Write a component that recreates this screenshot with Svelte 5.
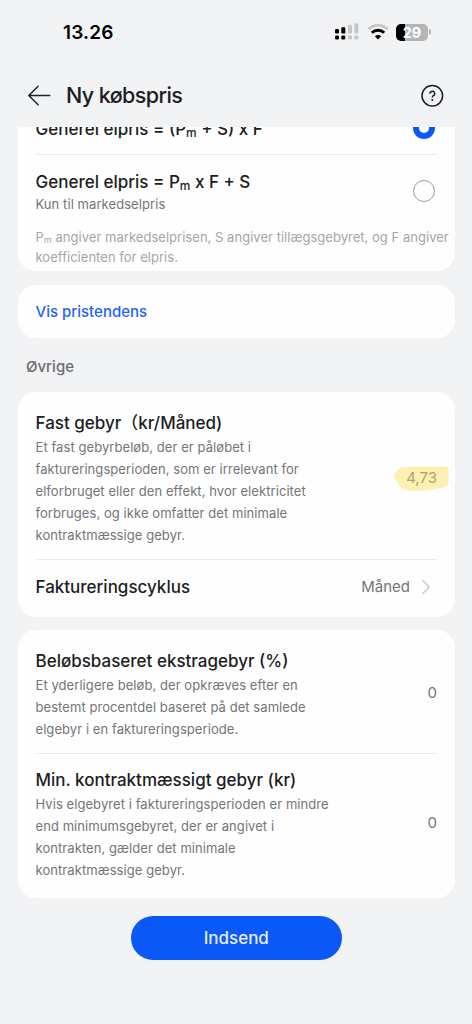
<script>
  let formula = $state('sum');

  // Descriptions keep their own line breaks (white-space: pre-line).
  const fixedFee = {
    title: 'Fast gebyr（kr/Måned)',
    text: 'Et fast gebyrbeløb, der er påløbet i\nfaktureringsperioden, som er irrelevant for\nelforbruget eller den effekt, hvor elektricitet\nforbruges, og ikke omfatter det minimale\nkontraktmæssige gebyr.',
    value: '4,73'
  };

  const extraFees = [
    {
      key: 'surcharge',
      title: 'Beløbsbaseret ekstragebyr (%)',
      text: 'Et yderligere beløb, der opkræves efter en\nbestemt procentdel baseret på det samlede\nelgebyr i en faktureringsperiode.',
      value: '0'
    },
    {
      key: 'minimum',
      title: 'Min. kontraktmæssigt gebyr (kr)',
      text: 'Hvis elgebyret i faktureringsperioden er mindre\nend minimumsgebyret, der er angivet i\nkontrakten, gælder det minimale\nkontraktmæssige gebyr.',
      value: '0'
    }
  ];
</script>

<div class="screen">
  <div class="status">
    <span class="time">13.26</span>
    <div class="indicators">
      <svg width="26" height="18" viewBox="0 0 26 18">
        <rect x="1" y="6" width="4" height="4.5" rx="1.2" />
        <rect x="7.3" y="4.3" width="4" height="6.2" rx="1.2" />
        <g fill="#c5c6c8">
          <rect x="14" y="2" width="4" height="8.5" rx="1.2" />
          <rect x="20.3" y="0.3" width="4" height="10.2" rx="1.2" />
          <rect x="14" y="12.4" width="4" height="4.2" rx="1.4" />
          <rect x="20.3" y="12.4" width="4" height="4.2" rx="1.4" />
        </g>
        <rect x="1" y="12.4" width="4" height="4.2" rx="1.4" />
        <rect x="7.3" y="12.4" width="4" height="4.2" rx="1.4" />
      </svg>
      <svg class="wifi" width="22" height="16" viewBox="0 0 22 16">
        <path d="M1.4 5.2a13.7 13.7 0 0 1 19.2 0" fill="none" stroke="#c5c6c8" stroke-width="2.8" />
        <path d="M4.8 8.8a8.9 8.9 0 0 1 12.4 0" fill="none" stroke="#000" stroke-width="2.9" />
        <path d="M11 15.4L7.9 12.3a4.4 4.4 0 0 1 6.2 0z" />
      </svg>
      <div class="battery">
        <div class="cell">29</div>
        <i></i>
      </div>
    </div>
  </div>

  <header>
    <svg width="24" height="22" viewBox="0 0 24 22" fill="none" stroke="#222325" stroke-width="1.5" stroke-linecap="round" stroke-linejoin="round">
      <path d="M22.8 10.500H1.800M11.100 1.200L1.800 10.500l9.300 9.300" />
    </svg>
    <h1>Ny købspris</h1>
    <svg width="24" height="24" viewBox="0 0 24 24" fill="none" stroke="#1c1d1f">
      <circle cx="12.3" cy="11.7" r="10.3" stroke-width="1.5" />
      <path d="M9.900 9.700a2.400 2.300 0 1 1 3.500 2c-.8.5-1.100.9-1.100 1.700" stroke-width="1.5" />
      <circle cx="12.3" cy="15.9" r="1" fill="#1c1d1f" stroke="none" />
    </svg>
  </header>

  <main>
    <section class="card formulas">
      <div class="option first">
        <h2>Generel elpris = (P<sub>m</sub> + S) x F</h2>
        <button class="radio" class:on={formula === 'sum'} aria-label="(Pm + S) x F" onclick={() => (formula = 'sum')}></button>
      </div>
      <hr />
      <div class="option second">
        <div>
          <h2>Generel elpris = P<sub>m</sub> x F + S</h2>
          <p class="desc">Kun til markedselpris</p>
        </div>
        <button class="radio" class:on={formula === 'product'} aria-label="Pm x F + S" onclick={() => (formula = 'product')}></button>
      </div>
      <p class="note">P<sub>m</sub> angiver markedselprisen, S angiver tillægsgebyret, og F angiver<br />koefficienten for elpris.</p>
    </section>

    <section class="card trend">Vis pristendens</section>

    <h3>Øvrige</h3>

    <section class="card">
      <div class="fee">
        <div>
          <h2>{fixedFee.title}</h2>
          <p class="desc">{fixedFee.text}</p>
        </div>
        <span class="value marked">
          <svg width="56" height="26" viewBox="0 0 56 26">
            <path d="M8 1.500C20 0 38 .5 50 .8c4 .2 5.500 2.500 4.500 5.500-.8 2 .5 3 0 6.500-.2 2 .5 4-.5 5.700C51 22 44 22.500 38 23.600c-8 1.500-20 1.600-26 .3-4-.8-7.500-4-7.800-7.900C2 15 0 12.500.2 9.500.5 6 4 5.500 4.300 4 5 2.500 6 1.800 8 1.500z" fill="#feefb2" />
          </svg>
          <span>{fixedFee.value}</span>
        </span>
      </div>
      <hr />
      <div class="cycle">
        <h2>Faktureringscyklus</h2>
        <span class="value">Måned</span>
        <svg width="10" height="16" viewBox="0 0 10 16" fill="none" stroke="#c8c8ca" stroke-width="1.4">
          <path d="M1.500 1.300L8.200 8l-6.700 6.700" />
        </svg>
      </div>
    </section>

    <section class="card extra">
      {#each extraFees as fee, i (fee.key)}
        {#if i > 0}<hr />{/if}
        <div class="fee">
          <div>
            <h2>{fee.title}</h2>
            <p class="desc">{fee.text}</p>
          </div>
          <span class="value">{fee.value}</span>
        </div>
      {/each}
    </section>

    <button class="submit">Indsend</button>
  </main>
</div>

<style>
  :global(body) {
    background: #f1f3f5;
  }
  .screen {
    height: 1024px;
    overflow: hidden;
    display: flex;
    flex-direction: column;
    background: #f1f3f5;
    color: #1c1d1f;
    font-family: Inter, 'Noto Sans CJK SC', sans-serif;
  }
  h1,
  h2,
  h3,
  p {
    margin: 0;
    font-weight: 400;
  }
  svg {
    display: block;
    flex: none;
  }
  .status {
    height: 64px;
    box-sizing: border-box;
    padding: 0 41px 0 63px;
    display: flex;
    align-items: center;
    justify-content: space-between;
  }
  .time {
    font-size: 19px;
    font-weight: 600;
    color: #000;
    letter-spacing: 0.15px;
  }
  .indicators {
    display: flex;
    align-items: center;
    gap: 7px;
  }
  .battery {
    display: flex;
    align-items: center;
    gap: 1px;
  }
  .cell {
    width: 32px;
    height: 17px;
    border-radius: 5px;
    background: linear-gradient(90deg, #000 29%, #b4b5b7 29%);
    color: #fff;
    font-size: 14.5px;
    font-weight: 700;
    line-height: 17px;
    text-align: center;
  }
  .battery i {
    width: 2px;
    height: 6px;
    border-radius: 0 2px 2px 0;
    background: #b4b5b7;
  }
  header {
    height: 63px;
    box-sizing: border-box;
    padding: 0 28px 0 27px;
    display: flex;
    align-items: center;
  }
  h1 {
    flex: 1;
    margin-left: 15px;
    font-size: 21.5px;
    line-height: 26px;
    padding-bottom: 1px;
    font-weight: 500;
    letter-spacing: -0.6px;
  }
  main {
    flex: 1;
    min-height: 0;
    overflow: hidden;
    padding: 0 17.5px 0 18px;
  }
  .card {
    background: #fefefe;
    border-radius: 18px;
    padding: 0 17.5px;
    margin-bottom: 13px;
  }
  .formulas {
    height: 168px;
    margin-top: -24px;
    margin-bottom: 14px;
  }
  hr {
    height: 1px;
    margin: 0;
    border: 0;
    background: #e9eaeb;
  }
  h2 {
    font-size: 17px;
    font-weight: 500;
    line-height: 22px;
    letter-spacing: 0;
    white-space: nowrap;
  }
  sub {
    font-size: 0.7em;
    line-height: 0;
    vertical-align: -0.14em;
  }
  .desc {
    font-size: 13px;
    line-height: 22px;
    letter-spacing: 0.07px;
    color: #747577;
    white-space: pre-line;
  }
  .option {
    display: flex;
    justify-content: space-between;
    align-items: center;
  }
  .option.first {
    height: 51px;
  }
  .option.second {
    padding: 16px 0 12px;
    align-items: flex-start;
  }
  .second .radio {
    margin-top: 9px;
  }
  .radio {
    width: 22px;
    height: 22px;
    box-sizing: border-box;
    margin: 0 2px 0 0;
    padding: 0;
    border: 1.5px solid #9a9b9c;
    border-radius: 50%;
    background: none;
  }
  .radio.on {
    border: 6.5px solid #0a59f7;
  }
  .option.first .radio {
    margin-top: -1px;
  }
  .note {
    font-size: 13px;
    line-height: 20px;
    letter-spacing: 0.03px;
    color: #a5a6a7;
    white-space: nowrap;
  }
  .trend {
    height: 53px;
    line-height: 53px;
    margin-bottom: 18px;
    font-size: 15px;
    font-weight: 500;
    color: #1f63f5;
  }
  h3 {
    margin: 0 0 14px 8px;
    font-size: 15px;
    line-height: 22px;
    font-weight: 500;
    color: #6c6d6f;
  }
  .fee {
    display: flex;
    justify-content: space-between;
    align-items: center;
    padding: 20px 0 13px;
  }
  .fee .desc {
    margin-top: 2px;
  }
  .value {
    font-size: 15px;
    line-height: 22px;
    color: #747577;
  }
  .fee .value {
    margin-bottom: 4px;
  }
  .fee .marked {
    position: relative;
    margin-bottom: 2px;
    color: #aea36d;
  }
  .marked svg {
    position: absolute;
    left: -12px;
    top: -1px;
  }
  .marked span {
    position: relative;
  }
  .cycle {
    display: flex;
    align-items: center;
    height: 53px;
    padding-bottom: 4px;
  }
  .cycle h2 {
    flex: 1;
  }
  .cycle svg {
    margin: 0 6px 0 11px;
  }
  .extra .fee:last-child {
    padding: 15px 0 17px;
  }
  .submit {
    display: block;
    width: 211px;
    height: 44px;
    margin: 18px auto 0;
    border: 0;
    border-radius: 22px;
    background: #0a59f7;
    color: #e4edff;
    font: 500 17px Inter, sans-serif;
  }
</style>
